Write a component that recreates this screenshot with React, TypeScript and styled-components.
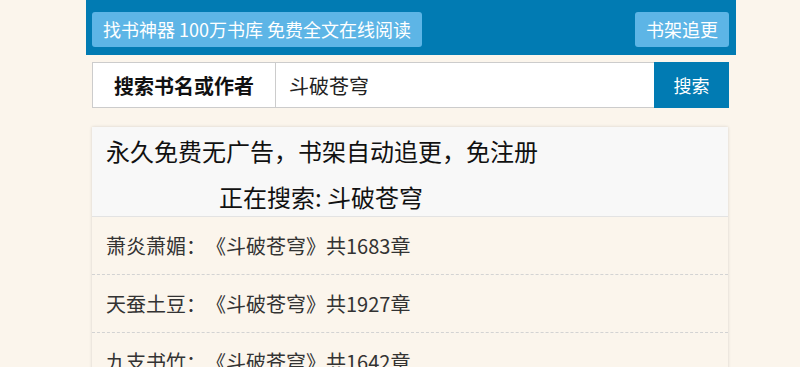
import styled, { createGlobalStyle } from 'styled-components';

const GlobalStyle = createGlobalStyle`
  html, body {
    margin: 0;
    padding: 0;
    background-color: #fbf5ec;
    font-family: "Microsoft YaHei", "Noto Sans CJK SC", "Noto Sans", sans-serif;
    text-spacing-trim: space-all;
  }
`;

const Page = styled.div`
  width: 650px;
  margin-left: 86px;
`;

const TopBar = styled.div`
  height: 55px;
  background-color: #017bb3;
  display: flex;
  justify-content: space-between;
  align-items: flex-start;
  padding: 12px 7px 0 6px;
  box-sizing: border-box;
`;

const TopButton = styled.a`
  display: block;
  height: 35px;
  line-height: 34px;
  padding: 0 11px;
  background-color: #5db5e6;
  color: #ffffff;
  font-size: 18px;
  border-radius: 3px;
  text-decoration: none;
  white-space: nowrap;
`;

const SearchRow = styled.form`
  display: flex;
  margin: 7px 7px 0 6px;
  height: 46px;
`;

const SearchLabel = styled.div`
  width: 184px;
  box-sizing: border-box;
  border: 1px solid #cccccc;
  background-color: #ffffff;
  display: flex;
  align-items: center;
  justify-content: center;
  font-size: 20px;
  font-weight: bold;
  color: #111111;
`;

const SearchInput = styled.input`
  flex: 1;
  box-sizing: border-box;
  height: 46px;
  border: 1px solid #cccccc;
  border-left: 0;
  border-right: 0;
  padding: 0 13px;
  font-family: inherit;
  font-size: 20px;
  color: #222222;
  outline: none;
`;

const SearchButton = styled.button`
  width: 75px;
  height: 46px;
  border: 0;
  background-color: #017bb3;
  color: #ffffff;
  font-family: inherit;
  font-size: 18px;
`;

const Panel = styled.div`
  margin: 19px 8px 0 6px;
  background-color: #fbf5ec;
  box-shadow: 0 0 3px rgba(0, 0, 0, 0.15);
`;

const PanelHead = styled.div`
  background-color: #f8f8f8;
  border-bottom: 1px solid #e3e3e3;
  padding: 2px 14px 0;
  color: #111111;
  font-size: 24px;
  line-height: 44px;
`;

const Searching = styled.div`
  margin-top: 5px;
  line-height: 38px;
  padding-left: 113px;
`;

const ResultRow = styled.div`
  height: 57px;
  line-height: 58px;
  padding-left: 14px;
  font-size: 20px;
  color: #333333;
  border-bottom: 1px dashed #d3d3d3;
  white-space: nowrap;
`;

const results = [
  { author: '萧炎萧媚', count: 1683 },
  { author: '天蚕土豆', count: 1927 },
  { author: '九支书竹', count: 1642 },
];

export default function App() {
  const keyword = '斗破苍穹';
  return (
    <Page>
      <GlobalStyle />
      <TopBar>
        <TopButton href="#">找书神器 100万书库 免费全文在线阅读</TopButton>
        <TopButton href="#">书架追更</TopButton>
      </TopBar>
      <SearchRow onSubmit={(e) => e.preventDefault()}>
        <SearchLabel>搜索书名或作者</SearchLabel>
        <SearchInput defaultValue={keyword} />
        <SearchButton type="submit">搜索</SearchButton>
      </SearchRow>
      <Panel>
        <PanelHead>
          永久免费无广告，书架自动追更，免注册
          <Searching>正在搜索: {keyword}</Searching>
        </PanelHead>
        {results.map((r) => (
          <ResultRow key={r.author}>
            {r.author}：《{keyword}》共{r.count}章
          </ResultRow>
        ))}
      </Panel>
    </Page>
  );
}
